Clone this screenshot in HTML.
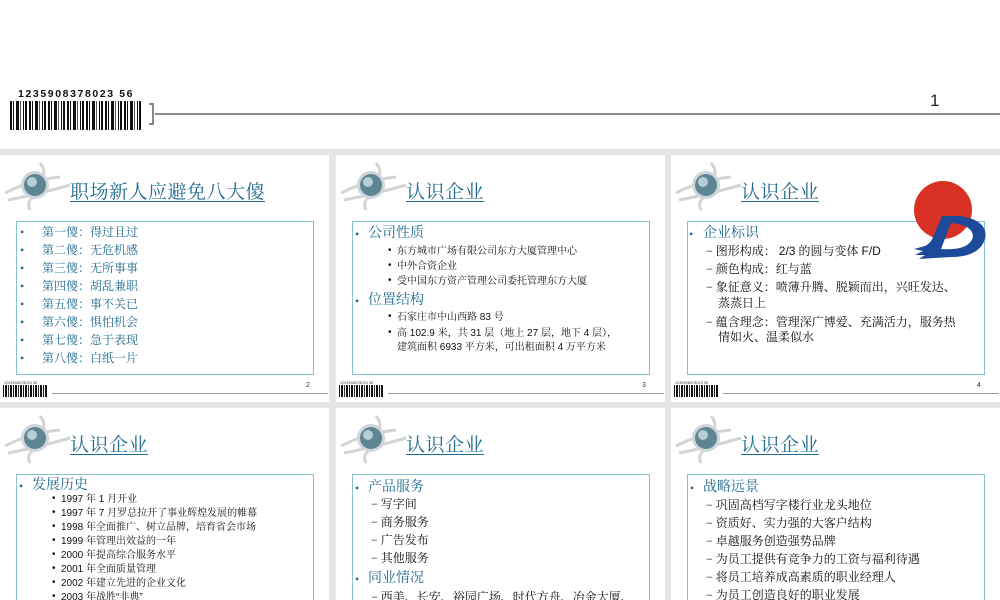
<!DOCTYPE html>
<html><head><meta charset="utf-8"><style>
*{margin:0;padding:0;box-sizing:border-box}
html,body{width:1000px;height:600px;overflow:hidden}
body{background:#fff;position:relative;font-family:"Liberation Serif","Noto Serif CJK SC",serif}
.abs{position:absolute}
.gray{position:absolute;left:0;top:149px;width:1000px;height:451px;background:#e6e6e6}
.slide{position:absolute;width:329px;height:247px;background:#fff;overflow:hidden}
.r2{height:192px}
.title{position:absolute;left:70px;top:22px;font-size:19px;color:#1f6a8e;text-decoration:underline;text-decoration-thickness:1px;text-underline-offset:3px;white-space:nowrap;letter-spacing:0.5px}
.box{position:absolute;left:16px;top:66px;width:298px;height:154px;border:1px solid #86c4cc}
.r2 .box{height:140px}
.t{position:absolute;white-space:nowrap;line-height:1}
.h{font-size:14px;color:#1f6a8e}
.b1{font-size:12px;color:#1f6a8e}
.s{font-size:10px;color:#111;font-family:"Liberation Sans","Noto Serif CJK SC",serif}
.d{font-size:12px;color:#111}
.num{position:absolute;left:306px;top:227px;font-size:7px;font-family:"Liberation Sans",sans-serif;color:#333}
.fl{position:absolute;left:52px;top:238px;width:276px;height:1px;background:#999}
.bc{position:absolute;left:3px;top:230px;width:44px;height:12px;background:repeating-linear-gradient(90deg,#111 0 1px,#fff 1px 2px,#111 2px 4px,#fff 4px 5px,#333 5px 6px,#fff 6px 7px,#111 7px 9px,#fff 9px 10px)}
.bcd{position:absolute;left:4px;top:226px;font-size:3.5px;font-family:"Liberation Sans",sans-serif;color:#333;letter-spacing:0.2px}
</style></head><body>

<div class="abs" style="left:18px;top:88px;font-family:'Liberation Sans',sans-serif;font-weight:bold;font-size:10.5px;letter-spacing:1.6px;color:#111">1235908378023 56</div>
<div class="abs" style="left:10px;top:101px;width:133px;height:29px;background:repeating-linear-gradient(90deg,#111 0 2px,#fff 2px 3px,#111 3px 4px,#fff 4px 6px,#111 6px 9px,#fff 9px 10px,#555 10px 11px,#fff 11px 13px,#111 13px 14px,#fff 14px 15px,#111 15px 17px,#fff 17px 19px)"></div>
<div class="abs" style="left:149px;top:103px;width:5px;height:22px;border:2px solid #888;border-left:none"></div>
<div class="abs" style="left:155px;top:113px;width:845px;height:2px;background:#8a8a8a"></div>
<div class="abs" style="left:930px;top:91px;font-family:'Liberation Sans',sans-serif;font-size:17px;color:#222">1</div>

<div class="gray"></div>

<div class="slide" style="left:0;top:155px">
 <svg class="abs" style="left:0;top:0" width="75" height="62"><g fill="none" stroke="#d4d4d4" stroke-width="3"><path d="M5 38 Q30 25 60 22"/><path d="M8 45 Q35 40 70 30"/><path d="M40 8 Q50 20 35 28"/><path d="M30 55 Q25 45 38 40"/></g><circle cx="35" cy="30" r="14" fill="#cfd6d9"/><circle cx="35" cy="30" r="11" fill="#5d8592"/><circle cx="32" cy="27" r="5" fill="#b5cdd5"/></svg>
 <div class="title">职场新人应避免八大傻</div>
 <div class="box"></div>
 <div class="t b1" style="left:20px;top:71px">•</div><div class="t b1" style="left:42px;top:71px">第一傻：得过且过</div>
 <div class="t b1" style="left:20px;top:89px">•</div><div class="t b1" style="left:42px;top:89px">第二傻：无危机感</div>
 <div class="t b1" style="left:20px;top:107px">•</div><div class="t b1" style="left:42px;top:107px">第三傻：无所事事</div>
 <div class="t b1" style="left:20px;top:125px">•</div><div class="t b1" style="left:42px;top:125px">第四傻：胡乱兼职</div>
 <div class="t b1" style="left:20px;top:143px">•</div><div class="t b1" style="left:42px;top:143px">第五傻：事不关已</div>
 <div class="t b1" style="left:20px;top:161px">•</div><div class="t b1" style="left:42px;top:161px">第六傻：惧怕机会</div>
 <div class="t b1" style="left:20px;top:179px">•</div><div class="t b1" style="left:42px;top:179px">第七傻：急于表现</div>
 <div class="t b1" style="left:20px;top:197px">•</div><div class="t b1" style="left:42px;top:197px">第八傻：白纸一片</div>
 <div class="bcd">1235908378023 56</div><div class="bc"></div><div class="fl"></div><div class="num">2</div>
</div>

<div class="slide" style="left:336px;top:155px">
 <svg class="abs" style="left:0;top:0" width="75" height="62"><g fill="none" stroke="#d4d4d4" stroke-width="3"><path d="M5 38 Q30 25 60 22"/><path d="M8 45 Q35 40 70 30"/><path d="M40 8 Q50 20 35 28"/><path d="M30 55 Q25 45 38 40"/></g><circle cx="35" cy="30" r="14" fill="#cfd6d9"/><circle cx="35" cy="30" r="11" fill="#5d8592"/><circle cx="32" cy="27" r="5" fill="#b5cdd5"/></svg>
 <div class="title">认识企业</div>
 <div class="box"></div>
 <div class="t b1" style="left:19px;top:73px">•</div><div class="t h" style="left:32px;top:72px">公司性质</div>
 <div class="t s" style="left:52px;top:91px">•</div><div class="t s" style="left:61px;top:92px">东方城市广场有限公司东方大厦管理中心</div>
 <div class="t s" style="left:52px;top:106px">•</div><div class="t s" style="left:61px;top:107px">中外合资企业</div>
 <div class="t s" style="left:52px;top:121px">•</div><div class="t s" style="left:61px;top:122px">受中国东方资产管理公司委托管理东方大厦</div>
 <div class="t b1" style="left:19px;top:140px">•</div><div class="t h" style="left:32px;top:139px">位置结构</div>
 <div class="t s" style="left:52px;top:157px">•</div><div class="t s" style="left:61px;top:158px">石家庄市中山西路 83 号</div>
 <div class="t s" style="left:52px;top:173px">•</div><div class="t s" style="left:61px;top:174px">高 102.9 米，共 31 层（地上 27 层，地下 4 层），</div>
 <div class="t s" style="left:61px;top:188px">建筑面积 6933 平方米，可出租面积 4 万平方米</div>
 <div class="bcd">1235908378023 56</div><div class="bc"></div><div class="fl"></div><div class="num">3</div>
</div>

<div class="slide" style="left:671px;top:155px">
 <svg class="abs" style="left:0;top:0" width="75" height="62"><g fill="none" stroke="#d4d4d4" stroke-width="3"><path d="M5 38 Q30 25 60 22"/><path d="M8 45 Q35 40 70 30"/><path d="M40 8 Q50 20 35 28"/><path d="M30 55 Q25 45 38 40"/></g><circle cx="35" cy="30" r="14" fill="#cfd6d9"/><circle cx="35" cy="30" r="11" fill="#5d8592"/><circle cx="32" cy="27" r="5" fill="#b5cdd5"/></svg>
 <div class="title">认识企业</div>
 <div class="box"></div>
 <svg class="abs" style="left:240px;top:20px" width="89" height="88"><circle cx="32" cy="35" r="29" fill="#d93224"/><path d="M31 41 L50 41 Q78 46 74 64 Q68 82 40 82 L8 84 L14 80 L4 80 L12 76 L3 74 L14 71 Q20 68 22 62 Z M40 48 L30 74 Q58 76 62 62 Q62 50 40 48 Z" fill="#1d4a9a" fill-rule="evenodd"/></svg>
 <div class="t b1" style="left:18px;top:73px">•</div><div class="t h" style="left:32px;top:72px">企业标识</div>
 <div class="t d" style="left:35px;top:90px">− 图形构成： <span style="font-family:'Liberation Sans',sans-serif">2/3</span> 的圆与变体 <span style="font-family:'Liberation Sans',sans-serif">F/D</span></div>
 <div class="t d" style="left:35px;top:108px">− 颜色构成：红与蓝</div>
 <div class="t d" style="left:35px;top:126px">− 象征意义：喷薄升腾、脱颖而出，兴旺发达、</div>
 <div class="t d" style="left:47px;top:142px">蒸蒸日上</div>
 <div class="t d" style="left:35px;top:161px">− 蕴含理念：管理深广博爱、充满活力，服务热</div>
 <div class="t d" style="left:47px;top:176px">情如火、温柔似水</div>
 <div class="bcd">1235908378023 56</div><div class="bc"></div><div class="fl"></div><div class="num">4</div>
</div>

<div class="slide r2" style="left:0;top:408px">
 <svg class="abs" style="left:0;top:0" width="75" height="62"><g fill="none" stroke="#d4d4d4" stroke-width="3"><path d="M5 38 Q30 25 60 22"/><path d="M8 45 Q35 40 70 30"/><path d="M40 8 Q50 20 35 28"/><path d="M30 55 Q25 45 38 40"/></g><circle cx="35" cy="30" r="14" fill="#cfd6d9"/><circle cx="35" cy="30" r="11" fill="#5d8592"/><circle cx="32" cy="27" r="5" fill="#b5cdd5"/></svg>
 <div class="title">认识企业</div>
 <div class="box"></div>
 <div class="t b1" style="left:19px;top:72px">•</div><div class="t h" style="left:32px;top:71px">发展历史</div>
 <div class="t s" style="left:52px;top:86px">•</div><div class="t s" style="left:61px;top:87px">1997 年 1 月开业</div>
 <div class="t s" style="left:52px;top:100px">•</div><div class="t s" style="left:61px;top:101px">1997 年 7 月罗总拉开了事业辉煌发展的帷幕</div>
 <div class="t s" style="left:52px;top:114px">•</div><div class="t s" style="left:61px;top:115px">1998 年全面推广、树立品牌，培育省会市场</div>
 <div class="t s" style="left:52px;top:128px">•</div><div class="t s" style="left:61px;top:129px">1999 年管理出效益的一年</div>
 <div class="t s" style="left:52px;top:142px">•</div><div class="t s" style="left:61px;top:143px">2000 年提高综合服务水平</div>
 <div class="t s" style="left:52px;top:156px">•</div><div class="t s" style="left:61px;top:157px">2001 年全面质量管理</div>
 <div class="t s" style="left:52px;top:170px">•</div><div class="t s" style="left:61px;top:171px">2002 年建立先进的企业文化</div>
 <div class="t s" style="left:52px;top:184px">•</div><div class="t s" style="left:61px;top:185px">2003 年战胜“非典”</div>
</div>

<div class="slide r2" style="left:336px;top:408px">
 <svg class="abs" style="left:0;top:0" width="75" height="62"><g fill="none" stroke="#d4d4d4" stroke-width="3"><path d="M5 38 Q30 25 60 22"/><path d="M8 45 Q35 40 70 30"/><path d="M40 8 Q50 20 35 28"/><path d="M30 55 Q25 45 38 40"/></g><circle cx="35" cy="30" r="14" fill="#cfd6d9"/><circle cx="35" cy="30" r="11" fill="#5d8592"/><circle cx="32" cy="27" r="5" fill="#b5cdd5"/></svg>
 <div class="title">认识企业</div>
 <div class="box"></div>
 <div class="t b1" style="left:19px;top:74px">•</div><div class="t h" style="left:32px;top:73px">产品服务</div>
 <div class="t d" style="left:35px;top:90px">− 写字间</div>
 <div class="t d" style="left:35px;top:108px">− 商务服务</div>
 <div class="t d" style="left:35px;top:126px">− 广告发布</div>
 <div class="t d" style="left:35px;top:144px">− 其他服务</div>
 <div class="t b1" style="left:19px;top:165px">•</div><div class="t h" style="left:32px;top:164px">同业情况</div>
 <div class="t d" style="left:35px;top:183px">− 西美、长安、裕园广场、时代方舟、冶金大厦、</div>
</div>

<div class="slide r2" style="left:671px;top:408px">
 <svg class="abs" style="left:0;top:0" width="75" height="62"><g fill="none" stroke="#d4d4d4" stroke-width="3"><path d="M5 38 Q30 25 60 22"/><path d="M8 45 Q35 40 70 30"/><path d="M40 8 Q50 20 35 28"/><path d="M30 55 Q25 45 38 40"/></g><circle cx="35" cy="30" r="14" fill="#cfd6d9"/><circle cx="35" cy="30" r="11" fill="#5d8592"/><circle cx="32" cy="27" r="5" fill="#b5cdd5"/></svg>
 <div class="title">认识企业</div>
 <div class="box"></div>
 <div class="t b1" style="left:19px;top:74px">•</div><div class="t h" style="left:32px;top:73px">战略远景</div>
 <div class="t d" style="left:35px;top:91px">− 巩固高档写字楼行业龙头地位</div>
 <div class="t d" style="left:35px;top:109px">− 资质好、实力强的大客户结构</div>
 <div class="t d" style="left:35px;top:127px">− 卓越服务创造强势品牌</div>
 <div class="t d" style="left:35px;top:145px">− 为员工提供有竞争力的工资与福利待遇</div>
 <div class="t d" style="left:35px;top:163px">− 将员工培养成高素质的职业经理人</div>
 <div class="t d" style="left:35px;top:181px">− 为员工创造良好的职业发展</div>
</div>

</body></html>
